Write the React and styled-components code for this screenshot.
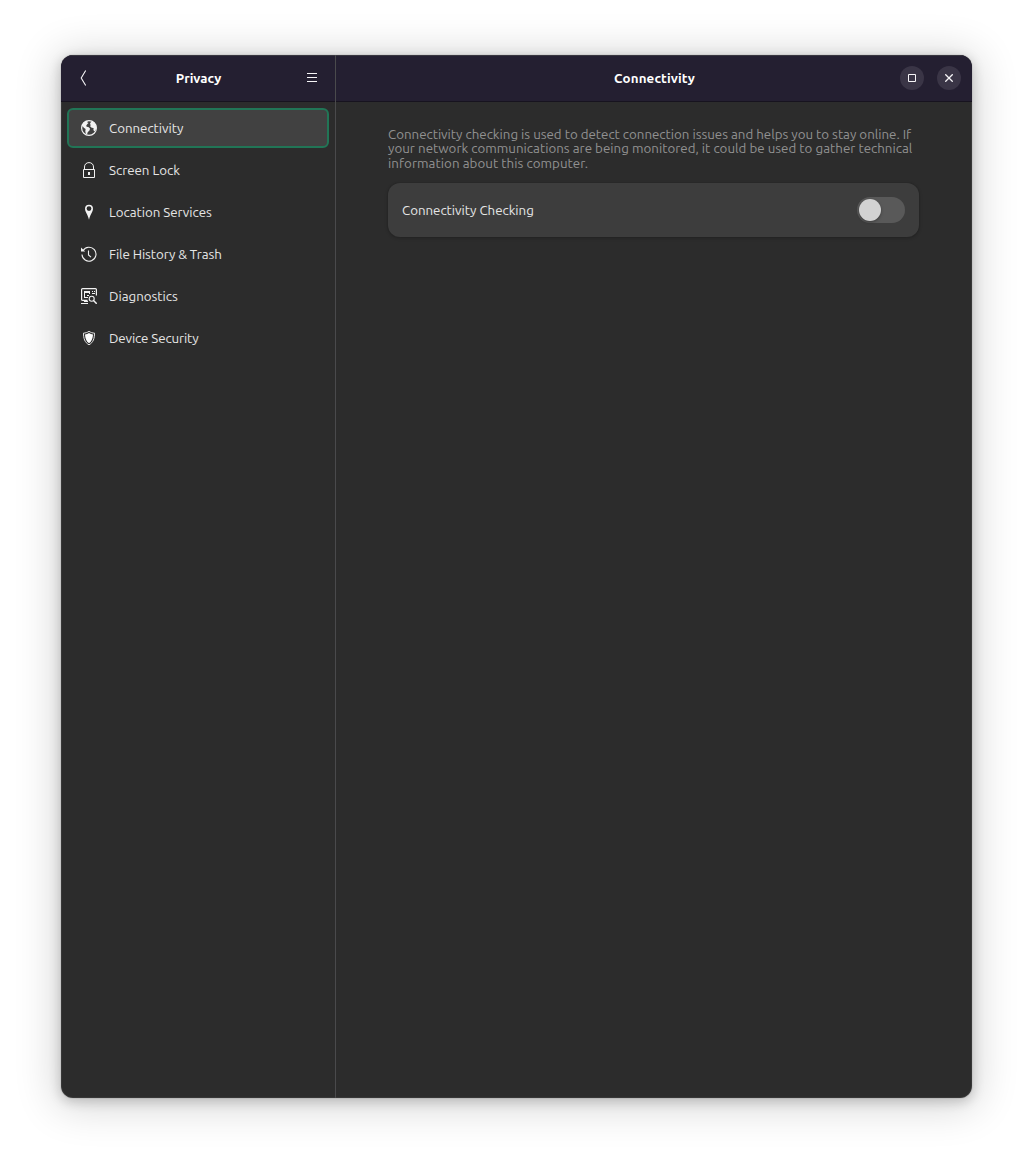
import React from "react";
import styled, { createGlobalStyle } from "styled-components";

const GlobalStyle = createGlobalStyle`
  * { box-sizing: border-box; }
  body {
    margin: 0;
    background: #fff;
    font-family: Ubuntu, "Noto Sans", "Open Sans", sans-serif;
    font-size: 13.333px;
    color: #e6e6e6;
  }
`;

const Desktop = styled.div`
  width: 1033px;
  height: 1165px;
  padding: 55px 61px 67px;
  overflow: hidden;
`;

const Window = styled.div`
  display: grid;
  grid-template-columns: 275px 1fr;
  width: 911px;
  height: 1043px;
  border-radius: 12px;
  overflow: hidden;
  background: #2c2c2c;
  box-shadow: inset 0 0 0 1px rgba(255, 255, 255, 0.06), 0 0 0 1px rgba(0, 0, 0, 0.05),
    0 3px 12px 1px rgba(0, 0, 0, 0.18), 0 4px 42px 6px rgba(0, 0, 0, 0.16);
`;

const Sidebar = styled.aside`
  display: flex;
  flex-direction: column;
  border-right: 1px solid #4a4a4c;
`;

const Main = styled.main`
  display: flex;
  flex-direction: column;
`;

const HeaderBar = styled.header`
  display: grid;
  grid-template-columns: ${(p) => p.$columns};
  align-items: center;
  height: 47px;
  background: #241f31;
  border-bottom: 1px solid #17131f;
  box-shadow: inset 0 1px 0 #38363f;
`;

const Text = styled.span`
  white-space: nowrap;
  letter-spacing: ${(p) => p.$track || 0}px;
`;

const Label = styled(Text)`
  display: block;
  padding-top: 2px;
  line-height: 18px;
`;

const Title = styled.h1`
  margin: 0;
  padding: 2px 0 0 1px;
  font-size: 13.333px;
  font-weight: 700;
  line-height: 18px;
  text-align: center;
  color: #fff;
`;

const IconButton = styled.button`
  display: flex;
  align-items: center;
  justify-content: center;
  width: 46px;
  height: 46px;
  padding: 0;
  border: 0;
  background: none;
  color: #f6f5f7;
`;

const WindowControls = styled.div`
  display: flex;
  gap: 13px;
`;

const ControlButton = styled(IconButton)`
  width: 24px;
  height: 24px;
  border-radius: 50%;
  background: #3a3546;
`;

const NavList = styled.nav`
  display: flex;
  flex-direction: column;
  gap: 2px;
  padding: 6px;
`;

const NavRow = styled.a`
  display: flex;
  align-items: center;
  gap: 12px;
  height: 40px;
  padding: 0 12px;
  border: 2px solid ${(p) => (p.$selected ? "#217556" : "transparent")};
  border-radius: 6px;
  background: ${(p) => (p.$selected ? "#414141" : "transparent")};
`;

const Icon = styled.svg`
  display: block;
  flex: none;
`;

const Content = styled.section`
  display: flex;
  flex-direction: column;
  gap: 11.4px;
  padding: 25.6px 53px 0 52px;
`;

const Description = styled.p`
  display: flex;
  flex-direction: column;
  margin: 0;
  height: 44px;
  line-height: 14.5px;
  color: #919191;
`;

const Card = styled.div`
  display: flex;
  align-items: center;
  justify-content: space-between;
  height: 54px;
  padding: 0 14px;
  border-radius: 12px;
  background: #3d3d3d;
  box-shadow: 0 1px 3px 1px rgba(0, 0, 0, 0.14), 0 0 0 1px rgba(0, 0, 0, 0.04);
`;

const Switch = styled.button`
  display: flex;
  align-items: center;
  width: 48px;
  height: 26px;
  padding: 2px;
  border: 0;
  border-radius: 13px;
  background: #595959;
`;

const Knob = styled.span`
  width: 22px;
  height: 22px;
  border-radius: 50%;
  background: #d2d2d2;
  box-shadow: 0 1px 3px rgba(0, 0, 0, 0.35);
`;

const Globe = () => (
  <Icon width="16" height="16" viewBox="0 0 16 16">
    <circle cx="8" cy="8" r="7.4" fill="none" stroke="#f2f2f2" strokeWidth="1.2" />
    <path
      fill="#f2f2f2"
      d="M.9 5.500 2.500 2.700 4.900 1.100l2-.2-.8 1.400 1.400.8-1.400 1.200-1 1.600.8.8 1.900.5 1.300 1.500-.8 2-1.500 1.300-.7 2.300-1.200-.2-.6-2.900.3-2.200L2.800 7.800 1.900 6.400zM8.900 4.100l1-2.200 1.400-.7 2.200 1.900 1.700 3.400-.3 2.900-1.500 2.200-1-1.700.2-2-1.900-.2-1.500-1.300.5-1.700z"
    />
  </Icon>
);

const Lock = () => (
  <Icon width="16" height="16" viewBox="0 0 16 16">
    <path fill="none" stroke="#f2f2f2" d="M3.500 7.500V5C3.500 2.300 5.400.6 8 .6s4.500 1.700 4.500 4.400v2.500M2.500 7.500h11v8h-11z" />
    <path fill="#f2f2f2" d="M7 10h2v3H7z" />
  </Icon>
);

const Pin = () => (
  <Icon width="16" height="16" viewBox="0 0 16 16">
    <path
      fill="#f2f2f2"
      fillRule="evenodd"
      d="M8 .8a4 4 0 0 1 4 4c0 2.900-2.600 5.500-4 11C6.600 10.300 4 7.700 4 4.800a4 4 0 0 1 4-4zm0 1.400a2.400 2.400 0 1 0 0 4.800 2.400 2.400 0 0 0 0-4.800z"
    />
  </Icon>
);

const History = () => (
  <Icon width="16" height="16" viewBox="0 0 16 16">
    <path fill="none" stroke="#f2f2f2" strokeWidth="1.100" d="M2 4.600A7 7 0 1 1 1 8.500M7.500 4.500V9L10 11.200" />
    <path fill="#f2f2f2" d="M0 1.500v4h4.200z" />
  </Icon>
);

const Diagnostics = () => (
  <Icon width="16" height="16" viewBox="0 0 16 16">
    <path fill="none" stroke="#f2f2f2" strokeWidth="1.200" d="M6.500 12.400H1.600Q.6 12.400.6 11.400V1.600Q.6.6 1.600.6h12.800q1 0 1 1V7.500" />
    <path fill="#f2f2f2" d="M3 3h6v2H4v4h3v1H3zM8 5h1v1H8zM11 3h1v1h-1zM13 3h1v1h-1zM11 5h3v1h-3zM6 7h2v1H6zM0 15h7v1H0zM3 13h4v1H3z" />
    <circle cx="10.700" cy="10.700" r="2.500" fill="none" stroke="#f2f2f2" strokeWidth="1.100" />
    <path stroke="#f2f2f2" strokeWidth="1.400" d="m12.500 12.500 3.200 3.300" />
  </Icon>
);

const Shield = () => (
  <Icon width="16" height="16" viewBox="0 0 16 16">
    <path fill="none" stroke="#e4e4e4" d="M8 1.300C6.300 2.500 4.400 3.100 2.500 3.100c0 5.200 1.100 9.300 5.500 11.700 4.400-2.400 5.500-6.500 5.500-11.700-1.900 0-3.800-.6-5.500-1.800z" />
    <path fill="#fff" d="M8 3c-1.200.7-2.500 1.200-4 1.400.2 3.800 1.200 6.800 4 8.900 2.800-2.100 3.800-5.100 4-8.900C10.500 4.200 9.200 3.700 8 3z" />
  </Icon>
);

const navItems = [
  { label: "Connectivity", icon: Globe, track: -0.02 },
  { label: "Screen Lock", icon: Lock, track: -0.02 },
  { label: "Location Services", icon: Pin, track: -0.03 },
  { label: "File History & Trash", icon: History, track: -0.08 },
  { label: "Diagnostics", icon: Diagnostics },
  { label: "Device Security", icon: Shield, track: -0.11 },
];

const descriptionLines = [
  { text: "Connectivity checking is used to detect connection issues and helps you to stay online. If", track: -0.01 },
  { text: "your network communications are being monitored, it could be used to gather technical", track: 0.018 },
  { text: "information about this computer.", track: 0.05 },
];

export default function App() {
  return (
    <>
      <GlobalStyle />
      <Desktop>
        <Window>
          <Sidebar>
            <HeaderBar $columns="46px 1fr 46px">
              <IconButton aria-label="Back">
                <Icon width="16" height="16" viewBox="0 0 16 16">
                  <path fill="none" stroke="currentColor" strokeWidth="1.100" d="M9.700.5 5.200 8l4.500 7.500" />
                </Icon>
              </IconButton>
              <Title><Text>Privacy</Text></Title>
              <IconButton aria-label="Menu">
                <Icon width="16" height="16" viewBox="0 0 16 16">
                  <path fill="currentColor" d="M3 3h10v1H3zM3 7h10v1H3zM3 11h10v1H3z" />
                </Icon>
              </IconButton>
            </HeaderBar>
            <NavList>
              {navItems.map(({ label, icon: Glyph, track }, i) => (
                <NavRow key={label} $selected={i === 0}>
                  <Glyph />
                  <Label $track={track}>{label}</Label>
                </NavRow>
              ))}
            </NavList>
          </Sidebar>
          <Main>
            <HeaderBar $columns="72px 1fr 72px">
              <span />
              <Title><Text $track={0.13}>Connectivity</Text></Title>
              <WindowControls>
                <ControlButton aria-label="Maximize">
                  <Icon width="8" height="8" viewBox="0 0 8 8">
                    <path fill="none" stroke="currentColor" d="M.5.5h7v7h-7z" />
                  </Icon>
                </ControlButton>
                <ControlButton aria-label="Close">
                  <Icon width="8" height="8" viewBox="0 0 8 8">
                    <path stroke="currentColor" strokeWidth="1.300" d="m.3.300 7.400 7.400M7.700.300.300 7.700" />
                  </Icon>
                </ControlButton>
              </WindowControls>
            </HeaderBar>
            <Content>
              <Description>
                {descriptionLines.map(({ text, track }) => (
                  <Text key={text} $track={track}>{text}</Text>
                ))}
              </Description>
              <Card>
                <Label $track={-0.02}>Connectivity Checking</Label>
                <Switch role="switch" aria-checked="false" aria-label="Connectivity Checking">
                  <Knob />
                </Switch>
              </Card>
            </Content>
          </Main>
        </Window>
      </Desktop>
    </>
  );
}
